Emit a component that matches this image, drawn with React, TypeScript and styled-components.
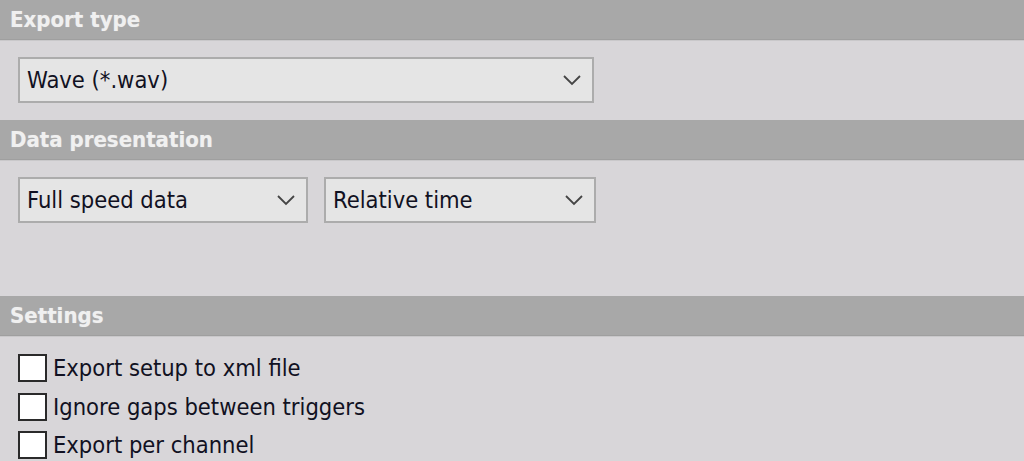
import React from "react";
import styled, { createGlobalStyle } from "styled-components";

const GlobalStyle = createGlobalStyle`
  html, body {
    margin: 0;
    padding: 0;
    background: #d8d6d9;
    font-family: "DejaVu Sans Condensed", "DejaVu Sans", sans-serif;
  }
`;

const Page = styled.div`
  width: 1024px;
  height: 461px;
  overflow: hidden;
  background: #d8d6d9;
  display: flex;
  flex-direction: column;
`;

const SectionHeader = styled.div`
  height: 40px;
  box-sizing: border-box;
  background: #a8a8a8;
  border-bottom: 1px solid #9f9f9f;
  padding: 0 10px;
  display: flex;
  align-items: center;
  color: #f0f0f0;
  font-weight: bold;
  font-size: 22px;
  text-shadow: 0 0 1px rgba(255, 255, 255, 0.4);
`;

const SectionBody = styled.div<{ height: number }>`
  height: ${(p) => p.height}px;
  box-sizing: border-box;
  border-top: 1px solid #c9c8ca;
  padding: 16px 18px 0;
  display: flex;
  flex-direction: column;
`;

const Row = styled.div`
  display: flex;
  gap: 16px;
`;

const SelectBox = styled.div<{ width: number }>`
  width: ${(p) => p.width}px;
  height: 46px;
  box-sizing: border-box;
  border: 2px solid #acacac;
  background: #e5e5e5;
  display: flex;
  align-items: center;
  justify-content: space-between;
  padding: 0 10px 0 7px;
  font-size: 23.5px;
  color: #111122;
`;

const Chevron = () => (
  <svg width="20" height="12" viewBox="0 0 20 12">
    <path d="M2 2 L10 10 L18 2" fill="none" stroke="#444" strokeWidth="1.8" />
  </svg>
);

const Select: React.FC<{ width: number; value: string }> = ({ width, value }) => (
  <SelectBox width={width}>
    <span>{value}</span>
    <Chevron />
  </SelectBox>
);

const CheckList = styled.div`
  display: flex;
  flex-direction: column;
  gap: 10.5px;
  margin-top: 1px;
`;

const CheckRow = styled.label`
  display: flex;
  align-items: center;
  gap: 6px;
  font-size: 23.5px;
  color: #111122;
  height: 28px;
`;

const Box = styled.span`
  width: 29px;
  height: 28px;
  box-sizing: border-box;
  border: 2px solid #2a2a2a;
  background: #ffffff;
  flex: none;
`;

const settings = [
  "Export setup to xml file",
  "Ignore gaps between triggers",
  "Export per channel",
];

const App: React.FC = () => (
  <>
    <GlobalStyle />
    <Page>
      <SectionHeader>Export type</SectionHeader>
      <SectionBody height={80}>
        <Select width={576} value="Wave (*.wav)" />
      </SectionBody>
      <SectionHeader>Data presentation</SectionHeader>
      <SectionBody height={136}>
        <Row>
          <Select width={290} value="Full speed data" />
          <Select width={272} value="Relative time" />
        </Row>
      </SectionBody>
      <SectionHeader>Settings</SectionHeader>
      <SectionBody height={125}>
        <CheckList>
          {settings.map((s) => (
            <CheckRow key={s}>
              <Box />
              {s}
            </CheckRow>
          ))}
        </CheckList>
      </SectionBody>
    </Page>
  </>
);

export default App;
